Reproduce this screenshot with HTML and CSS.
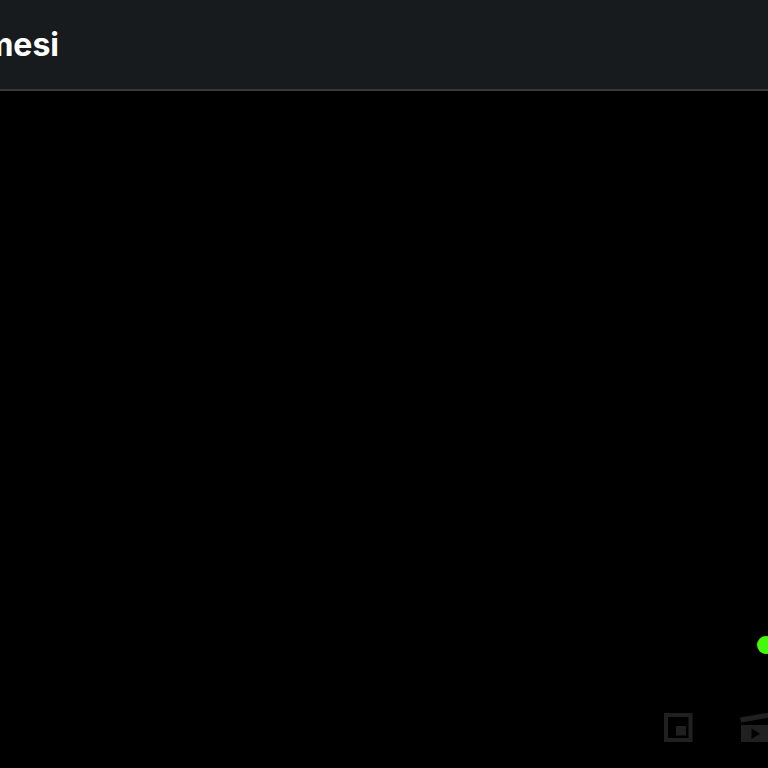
FILE: index.html
```
<!DOCTYPE html>
<html lang="tr">
<head>
    <meta charset="UTF-8">
    <meta name="viewport" content="width=device-width, initial-scale=1.0">
    <title>Video</title>
    <link rel="stylesheet" href="styles.css">
</head>
<body>

<header class="top-bar">
    <h1 class="title">mesi</h1>
</header>

<main class="player">
    <div class="status">
        <span class="dot"></span>
    </div>
    <div class="controls">
        <button class="icon-button" type="button" aria-label="Picture in picture">
            <svg viewBox="0 0 30 30" fill="currentColor">
                <path fill-rule="evenodd" d="M0 0H28.5V29H0ZM4 4V25H24.5V4Z"/>
                <path d="M12 13H22V22.5H12Z"/>
            </svg>
        </button>
        <button class="icon-button" type="button" aria-label="Clip">
            <svg viewBox="0 0 30 30" fill="currentColor">
                <path d="M0 4.5L29 -0.5L30 4.5L1 9.5Z"/>
                <path fill-rule="evenodd" d="M1 12H30V29H1ZM11.5 15.5V26L20 20.7Z"/>
            </svg>
        </button>
    </div>
</main>

</body>
</html>
```
FILE: styles.css
```
body {
    display: flex;
    flex-direction: column;
    min-height: 100vh;
    margin: 0;
    overflow: hidden;
    font-family: Inter, sans-serif;
    background-color: #000;
    color: #fff;
}

.top-bar {
    display: flex;
    align-items: center;
    box-sizing: border-box;
    height: 91px;
    background-color: #171b1e;
    border-bottom: 2px solid #393939;
}

/* Only the end of the title stays visible */
.title {
    display: flex;
    justify-content: flex-end;
    width: 59px;
    margin: 0;
    overflow: hidden;
    font-size: 32px;
    line-height: 40px;
    font-weight: 700;
}

.player {
    display: flex;
    flex: 1;
    flex-direction: column;
    justify-content: flex-end;
    gap: 59px;
    padding-bottom: 25px;
    overflow: hidden;
}

.status,
.controls {
    display: flex;
    justify-content: flex-end;
}

.dot {
    width: 18px;
    height: 18px;
    margin-right: -7px;
    border-radius: 50%;
    background-color: #43fb08;
}

/* The last button runs past the edge */
.controls {
    gap: 46px;
    margin-right: -2px;
}

.icon-button {
    width: 30px;
    height: 30px;
    padding: 0;
    border: 0;
    background: none;
    color: #202020;
    cursor: pointer;
}

.icon-button svg {
    display: block;
    width: 30px;
    height: 30px;
    overflow: visible;
}
```
